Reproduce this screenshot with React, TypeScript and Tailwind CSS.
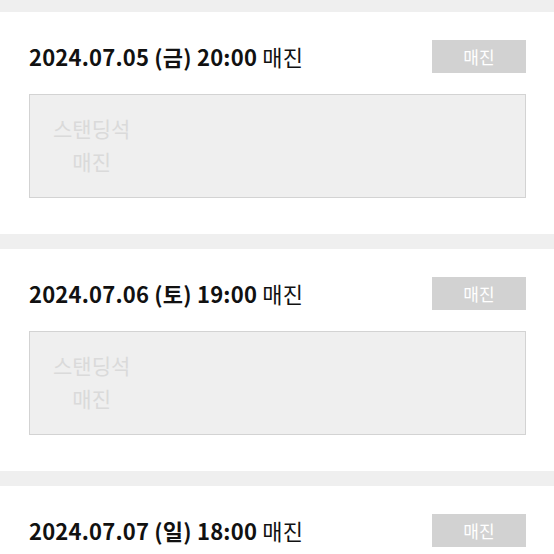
import React from 'react';

const shows = [
  { date: '2024.07.05 (금) 20:00' },
  { date: '2024.07.06 (토) 19:00' },
  { date: '2024.07.07 (일) 18:00' },
];

const Show: React.FC<{ date: string }> = ({ date }) => (
  <section className="bg-white px-[29px] pr-[28px] pt-[28px] pb-[36px]">
    <div className="flex items-center justify-between h-[33px]">
      <h2 className="text-[22px] font-bold text-[#111] tracking-[0.2px]">
        {date} <span className="font-normal">매진</span>
      </h2>
      <button className="w-[94px] h-[33px] bg-[#d2d2d2] text-white text-[17px]">매진</button>
    </div>
    <div className="mt-[21px] h-[104px] bg-[#efefef] border border-[#d3d3d3] pl-[23px] pt-[17px]">
      <div className="inline-flex flex-col items-center text-[21px] leading-[33px] text-[#dadada]">
        <span>스탠딩석</span>
        <span>매진</span>
      </div>
    </div>
  </section>
);

export default function App() {
  return (
    <div
      className="w-[554px] h-[554px] overflow-hidden bg-[#efefef] pt-[12px] flex flex-col gap-[15px]"
      style={{ fontFamily: '"Noto Sans CJK KR", "Noto Sans", sans-serif' }}
    >
      {shows.map((s) => (
        <Show key={s.date} date={s.date} />
      ))}
    </div>
  );
}
